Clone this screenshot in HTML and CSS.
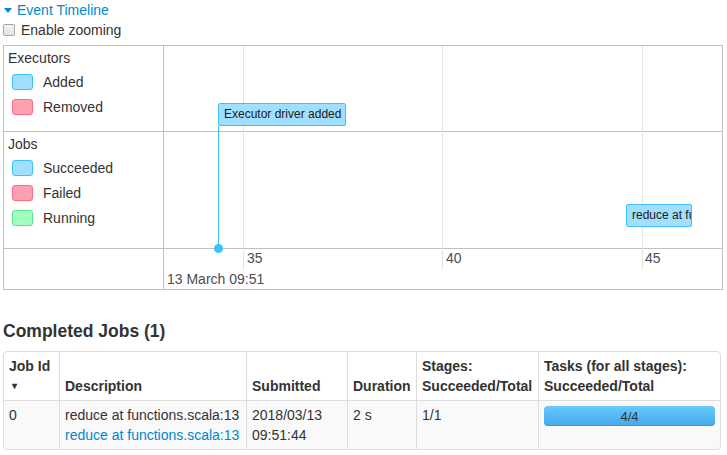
FILE: index.html
```
<!DOCTYPE html>
<html>
<head>
<meta charset="utf-8">
<link rel="stylesheet" href="styles.css">
</head>
<body>
<div class="page">
  <div class="toggle"><span class="arrow"></span><a class="toggle-link">Event Timeline</a></div>
  <label class="zoom"><input type="checkbox" class="check"><span>Enable zooming</span></label>

  <div class="timeline">
    <div class="label-cell row1">
      <div class="group-title">Executors</div>
      <div class="legend">
        <div class="legend-item"><span class="swatch sw-blue"></span>Added</div>
        <div class="legend-item"><span class="swatch sw-red"></span>Removed</div>
      </div>
    </div>
    <div class="chart-cell row1"></div>
    <div class="label-cell row2">
      <div class="group-title">Jobs</div>
      <div class="legend">
        <div class="legend-item"><span class="swatch sw-blue"></span>Succeeded</div>
        <div class="legend-item"><span class="swatch sw-red"></span>Failed</div>
        <div class="legend-item"><span class="swatch sw-green"></span>Running</div>
      </div>
    </div>
    <div class="chart-cell row2"></div>
    <div class="label-cell row3"></div>
    <div class="chart-cell row3"></div>

    <div class="canvas">
      <div class="gridline" style="left:79px"></div>
      <div class="gridline" style="left:278px"></div>
      <div class="gridline" style="left:478px"></div>
      <div class="tick" style="left:83px">35</div>
      <div class="tick" style="left:282px">40</div>
      <div class="tick" style="left:481px">45</div>
      <div class="major">13 March 09:51</div>
      <div class="stem"></div>
      <div class="dot"></div>
      <div class="item exec-item">Executor driver added</div>
      <div class="item job-item">reduce at functions.scala:13</div>
    </div>
  </div>

  <h4 class="section-title">Completed Jobs (1)</h4>
  <table class="jobs">
    <thead>
      <tr>
        <th class="c-id">Job Id<span class="sort">&nbsp;&#x25BE;</span></th>
        <th class="c-desc">Description</th>
        <th class="c-sub">Submitted</th>
        <th class="c-dur">Duration</th>
        <th class="c-stg">Stages:<br>Succeeded/Total</th>
        <th class="c-tsk">Tasks (for all stages):<br>Succeeded/Total</th>
      </tr>
    </thead>
    <tbody>
      <tr>
        <td>0</td>
        <td>reduce at functions.scala:13<br><a class="link">reduce at functions.scala:13</a></td>
        <td>2018/03/13<br>09:51:44</td>
        <td>2 s</td>
        <td>1/1</td>
        <td><div class="progress"><span class="progress-text">4/4</span></div></td>
      </tr>
    </tbody>
  </table>
</div>
</body>
</html>
```
FILE: styles.css
```
html, body {
  margin: 0;
  padding: 0;
  background: #fff;
}
body {
  font-family: "Liberation Sans", Arial, sans-serif;
  font-size: 14px;
  line-height: 20px;
  color: #333;
}
.page {
  padding: 0 5px 0 3px;
}
.toggle {
  height: 20px;
  display: flex;
  align-items: center;
}
.arrow {
  width: 0;
  height: 0;
  border-left: 4px solid transparent;
  border-right: 4px solid transparent;
  border-top: 5px solid #0088cc;
  margin: 0 5px 0 1px;
}
.toggle-link {
  color: #0088cc;
}
.zoom {
  display: flex;
  align-items: center;
  height: 20px;
}
.check {
  appearance: none;
  -webkit-appearance: none;
  width: 12px;
  height: 12px;
  margin: 0 6px 0 0;
  border: 1px solid #a6a6a6;
  border-radius: 2px;
  background: linear-gradient(#f4f4f4, #e2e2e2);
  box-sizing: border-box;
}
.timeline {
  position: relative;
  margin-top: 5px;
  display: grid;
  grid-template-columns: 160px 1fr;
  grid-template-rows: 86px 117px 40px;
  border: 1px solid #bfbfbf;
  width: 718px;
}
.label-cell {
  border-right: 1px solid #bfbfbf;
  padding: 2px 0 0 4px;
}
.row1, .row2 {
  border-bottom: 1px solid #bfbfbf;
}
.group-title {
  height: 20px;
}
.legend {
  margin-top: 1px;
}
.legend-item {
  height: 25px;
  display: flex;
  align-items: center;
  padding-left: 4px;
}
.swatch {
  width: 21px;
  height: 16px;
  box-sizing: border-box;
  border-radius: 3px;
  border: 1px solid;
  margin-right: 10px;
}
.sw-blue { background: #a0dfff; border-color: #3ec0ff; }
.sw-red { background: #ffa0b0; border-color: #ff6c88; }
.sw-green { background: #a0ffbe; border-color: #5ee38e; }

.canvas {
  position: absolute;
  left: 160px;
  top: 0;
  right: 0;
  bottom: 0;
  overflow: hidden;
}
.gridline {
  position: absolute;
  top: 0;
  width: 1px;
  height: 224px;
  background: #e5e5e5;
}
.tick {
  position: absolute;
  top: 204px;
  line-height: 16px;
  color: #4d4d4d;
}
.major {
  position: absolute;
  top: 225px;
  left: 3px;
  line-height: 16px;
  color: #4d4d4d;
}
.stem {
  position: absolute;
  left: 54px;
  top: 80px;
  width: 1px;
  height: 122px;
  background: #3ec0ff;
}
.dot {
  position: absolute;
  left: 50px;
  top: 198px;
  width: 9px;
  height: 9px;
  border-radius: 50%;
  background: #3ec0ff;
}
.item {
  position: absolute;
  height: 23px;
  box-sizing: border-box;
  background: #a0dfff;
  border: 1px solid #3ec0ff;
  border-radius: 2px;
  font-size: 12px;
  line-height: 21px;
  color: #1a1a1a;
  white-space: nowrap;
  overflow: hidden;
}
.exec-item {
  left: 54px;
  top: 57px;
  width: 128px;
  padding-left: 5px;
}
.job-item {
  left: 462px;
  top: 158px;
  width: 66px;
  padding-left: 5px;
}

.section-title {
  margin: 31px 0 10px;
  font-size: 17.5px;
  line-height: 20px;
  font-weight: bold;
  color: #333;
}
.jobs {
  width: 718px;
  border-collapse: separate;
  border-spacing: 0;
  border: 1px solid #ddd;
  border-left: 1px solid #ddd;
  border-radius: 4px;
  table-layout: fixed;
}
.jobs th, .jobs td {
  padding: 4px 5px;
  text-align: left;
  vertical-align: top;
  border-left: 1px solid #ddd;
  line-height: 20px;
}
.jobs th:first-child, .jobs td:first-child {
  border-left: 0;
}
.jobs th {
  vertical-align: bottom;
  font-weight: bold;
  white-space: nowrap;
}
.jobs td {
  border-top: 1px solid #ddd;
  background: #f9f9f9;
}
.jobs td:first-child { border-bottom-left-radius: 4px; }
.jobs td:last-child { border-bottom-right-radius: 4px; }
.c-id { width: 45px; }
.c-desc { width: 176px; }
.c-sub { width: 90px; }
.c-dur { width: 58px; }
.c-stg { width: 111px; }
.sort {
  display: block;
  font-size: 10px;
}
.link {
  color: #0088cc;
}
.progress {
  height: 20px;
  border-radius: 4px;
  background: linear-gradient(#66caff, #46a8e8);
  box-shadow: inset 0 -1px 0 rgba(0,0,0,0.1);
  text-align: center;
  margin-top: 1px;
}
.progress-text {
  font-size: 13px;
  line-height: 20px;
  color: #333;
}
```
